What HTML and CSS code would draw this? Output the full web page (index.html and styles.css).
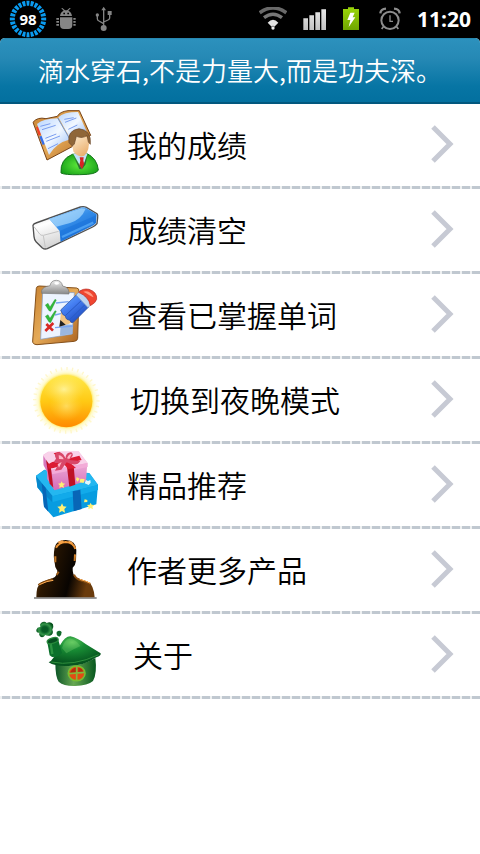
FILE: index.html
```html
<!DOCTYPE html>
<html lang="zh-CN">
<head>
<meta charset="utf-8">
<meta name="viewport" content="width=device-width, initial-scale=1">
<title>更多</title>
<link rel="stylesheet" href="styles.css">
</head>
<body>
<div class="status">
  <div class="status-group status-left">
    <span class="ring">
      <svg width="38" height="38" viewBox="0 0 38 38" aria-hidden="true"><circle cx="19" cy="19" r="15.7" fill="none" stroke="#0a9bf0" stroke-width="5" pathLength="240" stroke-dasharray="7 3" stroke-dashoffset="3.5"/></svg>
      <span class="ring-value">98</span>
    </span>
    <svg class="android" width="20" height="22" viewBox="0 0 60 66" aria-hidden="true" fill="#858585">
      <path d="M12 24c1-9 6-14 11-16l-7-7 2-2 9 8h6l9-8 2 2-7 7c5 2 10 7 11 16z"/><path d="M12 28h37v22q0 13-12 13H24q-12 0-12-13z"/>
      <path d="M1 30h8v5H1zm0 9h8v5H1zm0 9h8v5H1zm51-18h7v5h-7zm0 9h7v5h-7zm0 9h7v5h-7z"/>
      <path d="M22 14h5v5h-5zm12 0h5v5h-5z" fill="#000"/>
    </svg>
    <svg class="usb" width="18" height="26" viewBox="0 0 54 78" aria-hidden="true" fill="none" stroke="#858585" stroke-width="4">
      <path d="M26 8v56M7 28v10q0 5 5 7l14 8M44 24v12q0 4-5 6l-13 6"/><path d="M26 2l7 11H19z" fill="#858585" stroke="none"/><circle cx="26" cy="66" r="9" fill="#858585" stroke="none"/><circle cx="7" cy="27" r="5" fill="#858585" stroke="none"/><path d="M38 15h12v12H38z" fill="#858585" stroke="none"/>
    </svg>
  </div>
  <div class="status-group status-right">
    <svg width="28" height="24" viewBox="3 0 84 72" aria-hidden="true" fill="none">
      <path d="M5 17Q45-11 85 17" stroke="#696969" stroke-width="11"/><path d="M18 32Q45 11 72 32" stroke="#777" stroke-width="10"/><path d="M29 47q16-17 32 0L49 59q-4-5-8 0z" fill="#e2e2e2"/><circle cx="45" cy="63" r="5" fill="#eee"/>
    </svg>
    <svg width="24" height="24" viewBox="0 0 72 72" aria-hidden="true">
      <defs><linearGradient id="bars" x2="0" y2="1"><stop stop-color="#e8e8e8"/><stop offset="1" stop-color="#c2c2c2"/></linearGradient></defs>
      <path d="M1 34h14v35H1zM19 25h14v44H19zM37 16h14v53H37zM55 7h14v62H55z" fill="url(#bars)"/>
    </svg>
    <svg width="20" height="24" viewBox="0 0 60 72" aria-hidden="true">
      <defs><linearGradient id="cell" x2="0" y2="1"><stop stop-color="#9bd60a"/><stop offset="1" stop-color="#6fa500"/></linearGradient></defs>
      <path d="M0 6h15V1h18v5h15v63H0z" fill="url(#cell)"/><path d="M22 17h13l-6 14h8L17 60l5-21h-9z" fill="#fff"/>
    </svg>
    <svg width="22" height="24" viewBox="0 0 66 72" aria-hidden="true" fill="none" stroke="#8d8d8d">
      <circle cx="33" cy="40" r="26" stroke-width="6"/><path d="M33 25v18h9" stroke-width="4"/><path d="M4 19Q5 6 21 5M62 19Q61 6 45 5" stroke-width="7"/><path d="M13 59l-5 7M53 59l5 7" stroke-width="5"/>
    </svg>
    <span class="time">11:20</span>
  </div>
</div>
<header class="banner"><h1>滴水穿石,不是力量大,而是功夫深。</h1></header>
<main>
<ul class="menu">
  <li><a class="row" href="#scores">
    <svg class="icon" width="100" height="80" viewBox="0 0 300 240" aria-hidden="true">
      <defs>
        <linearGradient id="cover" x2="1" y2="1"><stop stop-color="#c88332"/><stop offset=".5" stop-color="#e5aa58"/><stop offset="1" stop-color="#a9601d"/></linearGradient>
        <linearGradient id="page" x2="1" y2="1"><stop stop-color="#b9d5ff"/><stop offset=".5" stop-color="#f2f8ff"/><stop offset="1" stop-color="#8eb8fa"/></linearGradient>
        <radialGradient id="shirt" cx=".5" cy=".55" r=".6"><stop stop-color="#60ec3c"/><stop offset="1" stop-color="#139c16"/></radialGradient>
        <linearGradient id="face" x2=".6" y2="1"><stop stop-color="#fff1d8"/><stop offset="1" stop-color="#eab171"/></linearGradient>
      </defs>
      <path d="M39 55Q52 38 78 44L112 37Q119 23 144 20L178 20L212 94L164 124L81 168Z" fill="url(#cover)" stroke="#774316" stroke-width="3" stroke-linejoin="round"/>
      <path d="M48 70l10-4 8 23-10 6z" fill="#f04227"/><path d="M58 98l10-4 9 25-9 4z" fill="#376ee8"/>
      <path d="M51 60Q70 44 113 43L151 106Q108 117 87 153Z" fill="url(#page)"/><path d="M115 40Q130 24 174 24L202 87L151 104Z" fill="url(#page)"/>
      <path d="M113 42l38 66" stroke="#7195ce" stroke-width="3"/>
      <path d="M61 67l30-8M66 77l41-13M76 103l33-13M79 112l41-16M84 134l30-15M133 46l28-5M135 55l34-13M145 76l27-13" stroke="#7a9df0" stroke-width="3"/>
      <path d="M123 207Q120 166 157 151L200 148Q232 164 235 198Q230 212 179 212Q134 213 123 207Z" fill="url(#shirt)" stroke="#16751c" stroke-width="3"/>
      <path d="M160 150l43-2-17 47z" fill="#bfe0fa"/><path d="M179 160h12l-1 10 4 14-8 12-8-12 3-14z" fill="#d72424"/><path d="M159 152l27 44-8-1zM203 150l-17 46 11-15z" fill="#2c6f36"/>
      <path d="M151 96Q175 84 206 102Q211 139 192 156Q173 162 160 142Z" fill="url(#face)"/>
      <path d="M147 116Q141 79 177 74Q215 78 211 121L205 114L201 94Q188 105 169 97L163 120L157 126Z" fill="#8f6638" stroke="#66462a" stroke-width="2"/>
    </svg><span>我的成绩</span>
    <svg class="arrow" width="24" height="40" viewBox="0 0 24 40" aria-hidden="true"><path d="M3 3L20 20L3 37"/></svg></a></li>
  <li><a class="row" href="#clear">
    <svg class="icon" width="100" height="80" viewBox="0 -3 300 240" aria-hidden="true">
      <defs><linearGradient id="blue" x2=".7" y2="1"><stop stop-color="#8fc9fb"/><stop offset=".5" stop-color="#338ce8"/><stop offset="1" stop-color="#1969d2"/></linearGradient><linearGradient id="rubber" x2=".5" y2="1"><stop stop-color="#ccc"/><stop offset=".4" stop-color="#fff"/><stop offset="1" stop-color="#c7c7c7"/></linearGradient></defs>
      <path d="M39 106Q41 101 48 99L181 51Q191 48 199 52L231 71Q235 76 233 82L231 101Q226 107 218 111L82 176Q74 179 67 174L48 155Q43 150 42 140Z" fill="url(#rubber)" stroke="#505050" stroke-width="4"/>
      <path d="M87 86L182 53Q190 50 198 54L230 73L228 99Q223 105 215 109L122 155L119 123Z" fill="url(#blue)"/>
      <path d="M88 87L184 55L197 56Q184 88 150 99L109 110Z" fill="#b3e0ff" opacity=".65"/><path d="M119 123L222 79L229 74L227 99L122 154Z" fill="#1670da" opacity=".5"/><path d="M126 141l94-43" stroke="#66b9ff" stroke-width="7" opacity=".6"/><path d="M116 124L70 136Q62 137 59 132L42 110M70 137l6 35" fill="none" stroke="#c4c4c4" stroke-width="3"/>
    </svg><span>成绩清空</span>
    <svg class="arrow" width="24" height="40" viewBox="0 0 24 40" aria-hidden="true"><path d="M3 3L20 20L3 37"/></svg></a></li>
  <li><a class="row" href="#mastered">
    <svg class="icon" width="100" height="80" viewBox="0 0 300 240" aria-hidden="true">
      <defs><linearGradient id="pencil" x2=".7" y2="1"><stop stop-color="#6db2ff"/><stop offset=".45" stop-color="#447df1"/><stop offset="1" stop-color="#1b47b9"/></linearGradient><linearGradient id="clip" x2="0" y2="1"><stop stop-color="#eee"/><stop offset="1" stop-color="#888"/></linearGradient></defs>
      <path d="M49 43Q50 36 58 36L170 42Q178 43 177 53L173 193Q172 201 163 202L51 212Q37 211 38 201Z" fill="url(#cover)" stroke="#85501a" stroke-width="3"/>
      <path d="M68 54L163 56L157 180L62 196Z" fill="#edf4ff" stroke="#7c9dce" stroke-width="2"/><path d="M122 150l36 2-2 28-36 5z" fill="#9bb7df"/>
      <path d="M65 49q4-11 25-14 3-16 19-16 15 0 19 17 18 4 19 18v6l-82-2z" fill="url(#clip)" stroke="#777" stroke-width="2"/><ellipse cx="110" cy="28" rx="7" ry="4" fill="#fff"/>
      <path d="M108 87l38-4M105 123l20-5M105 161l54-5" stroke="#78a4f0" stroke-width="4"/>
      <path d="M76 93l8-5 6 11 15-23 4 2-17 34-5-2zM76 127l8-5 6 11 15-23 4 2-17 34-5-2z" fill="#32b93a" stroke="#188826"/>
      <path d="M79 150l20 20M100 147l-24 24" stroke="#d82925" stroke-width="8"/>
      <path d="M118 158l6-50L162 142 147 149Z" fill="#f1c383"/><path d="M118 158l3-20 16 14z" fill="#222"/>
      <path d="M122 108L171 61L206 99L160 145Q152 149 149 138Q138 139 136 126Q126 124 122 108Z" fill="url(#pencil)" stroke="#264c99" stroke-width="2"/><path d="M136 125l51-48M148 138l48-47" stroke="#295ac4" stroke-width="3"/>
      <path d="M168 63L181 49L216 88L204 101Z" fill="#bed4ef" stroke="#6f91bf" stroke-width="2"/>
      <path d="M176 55Q188 42 207 46Q232 54 230 76Q226 88 211 95Q207 69 176 55Z" fill="#f04630" stroke="#b52c24" stroke-width="2"/><path d="M190 53q20-5 31 17-10-5-31-17z" fill="#ff9b83"/>
    </svg><span>查看已掌握单词</span>
    <svg class="arrow" width="24" height="40" viewBox="0 0 24 40" aria-hidden="true"><path d="M3 3L20 20L3 37"/></svg></a></li>
  <li><a class="row" href="#night">
    <svg class="icon" width="103" height="80" viewBox="0 -3 309 240" aria-hidden="true">
      <defs><radialGradient id="glow"><stop offset=".76" stop-color="#ffe34a"/><stop offset=".84" stop-color="#fff6a0" stop-opacity=".6"/><stop offset="1" stop-color="#fffbd8" stop-opacity="0"/></radialGradient><linearGradient id="sun" x2="0" y2="1"><stop stop-color="#ffe94a"/><stop offset=".5" stop-color="#ffc914"/><stop offset="1" stop-color="#ff8a00"/></linearGradient><radialGradient id="shine"><stop stop-color="#fff6a5" stop-opacity=".85"/><stop offset="1" stop-color="#ffe35a" stop-opacity="0"/></radialGradient></defs>
      <circle cx="139" cy="121" r="95" fill="none" stroke="#fff7cc" stroke-width="10" pathLength="144" stroke-dasharray="1 3"/>
      <circle cx="139" cy="123" r="100" fill="url(#glow)"/><circle cx="139" cy="124" r="78" fill="url(#sun)"/><ellipse cx="132" cy="88" rx="62" ry="44" fill="url(#shine)"/><ellipse cx="139" cy="138" rx="50" ry="44" fill="url(#shine)" opacity=".6"/>
    </svg><span>切换到夜晚模式</span>
    <svg class="arrow" width="24" height="40" viewBox="0 0 24 40" aria-hidden="true"><path d="M3 3L20 20L3 37"/></svg></a></li>
  <li><a class="row" href="#picks">
    <svg class="icon" width="100" height="80" viewBox="0 0 300 240" aria-hidden="true">
      <defs><linearGradient id="pink" x2="0" y2="1"><stop stop-color="#f7c6e5"/><stop offset="1" stop-color="#d56bb7"/></linearGradient></defs>
      <path d="M48 95L73 77L207 87L234 122L229 181L100 220L72 188L68 151L52 130Z" fill="#079ce0"/>
      <path d="M48 96L74 78L209 88L234 123L97 157Z" fill="#24b7f0"/><path d="M48 97l49 58v20L53 131z" fill="#0786cb"/><path d="M97 157l137-34v15L98 174z" fill="#12aaea"/>
      <path d="M158 142l23-5 4 58-24 7zM65 118l12 14 8 71-13-15z" fill="#0866b7"/>
      <path d="M70 32L84 23L176 22L202 56L198 112L104 139L82 105L82 84L71 64Z" fill="url(#pink)"/>
      <path d="M70 34L85 23L176 23L203 57L94 78Z" fill="#f9d2ea"/><path d="M70 35l24 43 10 61-22-34V85L71 64z" fill="#d679bd"/><path d="M94 78l109-21v12L96 91z" fill="#f3abd8"/>
      <path d="M141 69l20-4 5 57-18 6zM78 47l14 20 8 64-11-12z" fill="#be1126"/>
      <path d="M83 64q8-13 39-14l-21-22 17-5 21 22 39-10 7 13-34 9 17 15-24 3-15-18q-11 14-43 17z" fill="#dc1b34"/>
      <path d="M108 44q-10-17 10-20 14 4 18 20 2-20 18-19 12 8-7 23l34 3q-11 19-41 4l-16 22-19 3 11-23q-22 2-8-13z" fill="#d94769"/><path d="M116 34q11 1 15 12l-14-1zm25 9q5-13 14-13l-7 15zm-28 18l12-7-8 17z" fill="#ffb7ca"/>
      <path d="M126 178l4 9 10 1-7 7 2 11-9-5-9 5 2-11-7-7 10-1z" fill="#fff074"/><path d="M125 112l3 6 8 1-6 5 2 8-7-4-7 4 1-8-5-5 8-1zM212 176l3 6 8 1-6 5 2 8-7-4-7 4 1-8-5-5 8-1z" fill="#fff074"/><path d="M194 166l8 2 0 6-10 1zM170 99l9 5-6 9-5-6zM181 104l13 1-3 12-12-2z" fill="#fff074"/><path d="M198 108l6 3 7-3 1 8-6 7-12-5z" fill="#dff7ff"/>
    </svg><span>精品推荐</span>
    <svg class="arrow" width="24" height="40" viewBox="0 0 24 40" aria-hidden="true"><path d="M3 3L20 20L3 37"/></svg></a></li>
  <li><a class="row" href="#products">
    <svg class="icon" width="100" height="80" viewBox="0 -3 300 240" aria-hidden="true">
      <defs><linearGradient id="body" x2="1" y2=".25"><stop stop-color="#8b4f0c"/><stop offset=".28" stop-color="#2b1701"/><stop offset=".7" stop-color="#080401"/><stop offset="1" stop-color="#6a3b0c"/></linearGradient><linearGradient id="rim" x2="0" y2="1"><stop stop-color="#f79b38"/><stop offset="1" stop-color="#79420b"/></linearGradient><filter id="soft"><feGaussianBlur stdDeviation="2"/></filter></defs>
      <path d="M42 202h188v4H42z" fill="#777" filter="url(#soft)"/>
      <path d="M49 202Q49 166 64 157L99 144Q112 138 112 122Q104 113 104 98Q99 80 104 52Q108 31 137 30Q168 31 169 61L168 92Q167 105 158 113Q157 136 169 143L204 155Q221 164 224 202Z" fill="url(#body)"/>
      <path d="M108 53Q116 38 137 36Q161 38 166 57M165 73l-1 20M106 79v18M55 165Q70 155 98 148M110 135l6-10M162 134Q168 148 186 152L211 162" fill="none" stroke="url(#rim)" stroke-width="6" filter="url(#soft)"/>
      <path d="M113 36q8-5 15-5l5 6-14 5zM146 32q9 1 14 8l-6 2-9-5z" fill="#f5a34b"/><path d="M58 164q24-12 42-13M179 148q20 5 32 12" stroke="#ffae55" stroke-width="3" fill="none"/>
    </svg><span>作者更多产品</span>
    <svg class="arrow" width="24" height="40" viewBox="0 0 24 40" aria-hidden="true"><path d="M3 3L20 20L3 37"/></svg></a></li>
  <li><a class="row" href="#about">
    <svg class="icon" width="106" height="80" viewBox="0 0 318 240" aria-hidden="true">
      <defs><radialGradient id="roof" cx=".45" cy=".2" r=".7"><stop stop-color="#5cc85b"/><stop offset=".35" stop-color="#198e35"/><stop offset="1" stop-color="#06551f"/></radialGradient><linearGradient id="wall" x2="1"><stop stop-color="#0c5527"/><stop offset=".45" stop-color="#67a852"/><stop offset="1" stop-color="#07571f"/></linearGradient><radialGradient id="puff"><stop stop-color="#065a24"/><stop offset=".35" stop-color="#075c26"/><stop offset=".7" stop-color="#35964a"/><stop offset="1" stop-color="#06521d"/></radialGradient></defs>
      <path d="M63 27Q73 19 80 27Q92 21 99 31Q102 41 97 47Q103 59 90 65Q80 66 76 63Q68 74 60 67Q56 61 58 56Q48 57 49 47Q52 38 61 39Q58 32 63 27Z" fill="url(#puff)"/><path d="M110 54q8-8 15 0 0 10-7 14-10-2-8-14z" fill="#126a2d"/>
      <path d="M106 145Q164 169 226 132Q232 178 219 201Q204 214 165 216Q132 217 116 203Q106 190 106 145Z" fill="url(#wall)"/>
      <path d="M86 145Q100 140 119 95Q135 67 151 67Q172 71 198 91L242 118Q244 126 229 130Q195 155 146 156Q105 158 86 145Z" fill="url(#roof)"/><path d="M126 102Q134 76 150 73Q170 80 181 96Q159 106 139 118Z" fill="#84d878" opacity=".3"/><path d="M94 144Q160 158 236 122" fill="none" stroke="#2f8f3c" stroke-width="3"/>
      <path d="M82 85L114 75L126 117Q116 130 96 129L89 124Z" fill="#0b702b"/><path d="M92 88l5 32" stroke="#43ad52" stroke-width="7" opacity=".6"/><ellipse cx="98" cy="80" rx="17" ry="8" transform="rotate(-17 98 80)" fill="#064e20" stroke="#27883b" stroke-width="4"/>
      <ellipse cx="170" cy="178" rx="25" ry="22" fill="#e24c13" stroke="#77bd30" stroke-width="5"/><path d="M150 177q5-15 18-16v17zM175 162q13 0 15 13h-15z" fill="#b52b0d"/><path d="M170 157v42M147 179l46-4" stroke="#83b93a" stroke-width="5"/>
    </svg><span>关于</span>
    <svg class="arrow" width="24" height="40" viewBox="0 0 24 40" aria-hidden="true"><path d="M3 3L20 20L3 37"/></svg></a></li>
</ul>
</main>
</body>
</html>
```
FILE: styles.css
```css
* { box-sizing: border-box; }
body {
  margin: 0;
  background: #fff;
  color: #000;
  font-family: "Open Sans", "Noto Sans CJK SC", sans-serif;
}
svg { display: block; flex: none; }
.status {
  display: flex;
  justify-content: space-between;
  height: 38px;
  padding: 0 9px;
  background: #000;
  color: #fff;
}
.status-group { display: flex; align-items: center; }
.status-left { gap: 9px; }
.status-right { gap: 16px; }
.usb { margin-left: 10px; }
.ring { display: grid; place-items: center; }
.ring > * { grid-area: 1 / 1; }
.ring-value {
  font-family: "Noto Sans", sans-serif;
  font-size: 15px;
  line-height: 20px;
  font-weight: 700;
}
.time { font-size: 21px; line-height: 28px; font-weight: 700; }
.banner {
  display: flex;
  align-items: center;
  justify-content: center;
  min-height: 66px;
  padding-bottom: 2px;
  border-top: 1px solid #2788b0;
  border-bottom: 2px solid #02587e;
  border-radius: 5px 5px 0 0;
  background: linear-gradient(#2c91bd, #2689b5 30%, #0775a4 75%, #03709f);
  color: #fff;
  box-shadow: 0 -6px 0 #000;
}
.banner h1 {
  margin: 0;
  font-family: "Noto Sans CJK SC", sans-serif;
  font-size: 26px;
  line-height: 36px;
  font-weight: 350;
}
.menu { margin: 0; padding: 0; list-style: none; }
.menu li {
  padding-bottom: 3px;
  background: repeating-linear-gradient(90deg, #eef0f1 0 2px, #c0c8d0 2px 10px) bottom / 100% 3px no-repeat;
}
.row {
  display: flex;
  align-items: center;
  padding: 0 26px 2px 20px;
  color: #000;
  text-decoration: none;
  font-family: "Noto Sans CJK SC", sans-serif;
  font-size: 30px;
  line-height: 44px;
  font-weight: 350;
}
.icon { margin-right: 7px; }
.arrow {
  margin-left: auto;
  fill: none;
  stroke: #c7cad4;
  stroke-width: 5;
}
```
